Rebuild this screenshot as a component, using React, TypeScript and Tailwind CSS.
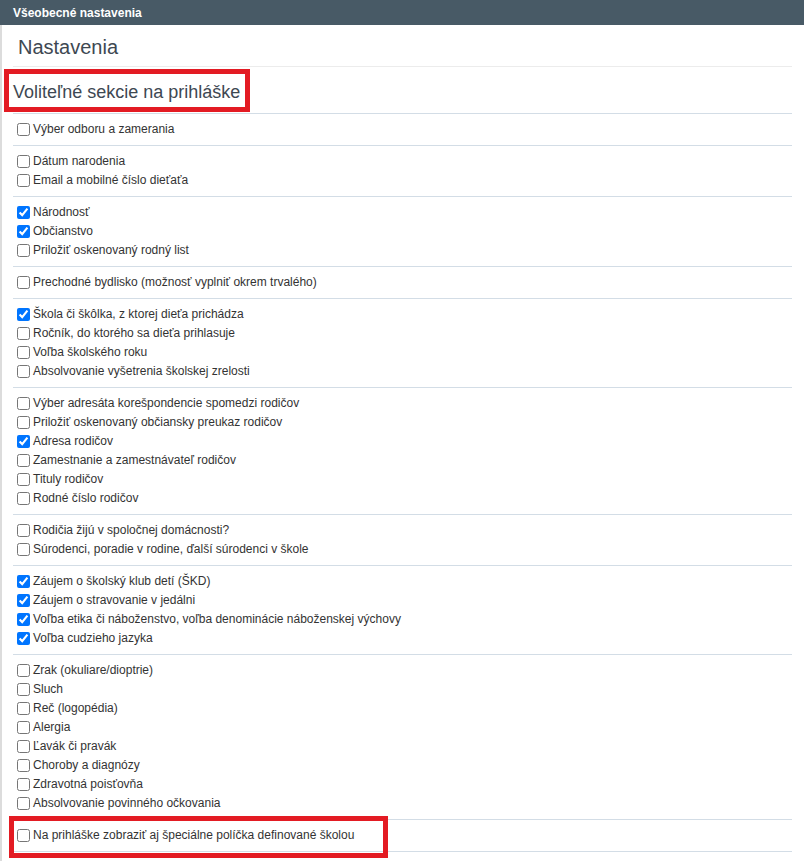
import React from "react";

type Item = { label: string; checked?: boolean };

const groups: Item[][] = [
  [{ label: "Výber odboru a zamerania" }],
  [{ label: "Dátum narodenia" }, { label: "Email a mobilné číslo dieťaťa" }],
  [
    { label: "Národnosť", checked: true },
    { label: "Občianstvo", checked: true },
    { label: "Priložiť oskenovaný rodný list" },
  ],
  [{ label: "Prechodné bydlisko (možnosť vyplniť okrem trvalého)" }],
  [
    { label: "Škola či škôlka, z ktorej dieťa prichádza", checked: true },
    { label: "Ročník, do ktorého sa dieťa prihlasuje" },
    { label: "Voľba školského roku" },
    { label: "Absolvovanie vyšetrenia školskej zrelosti" },
  ],
  [
    { label: "Výber adresáta korešpondencie spomedzi rodičov" },
    { label: "Priložiť oskenovaný občiansky preukaz rodičov" },
    { label: "Adresa rodičov", checked: true },
    { label: "Zamestnanie a zamestnávateľ rodičov" },
    { label: "Tituly rodičov" },
    { label: "Rodné číslo rodičov" },
  ],
  [
    { label: "Rodičia žijú v spoločnej domácnosti?" },
    { label: "Súrodenci, poradie v rodine, ďalší súrodenci v škole" },
  ],
  [
    { label: "Záujem o školský klub detí (ŠKD)", checked: true },
    { label: "Záujem o stravovanie v jedálni", checked: true },
    { label: "Voľba etika či náboženstvo, voľba denominácie náboženskej výchovy", checked: true },
    { label: "Voľba cudzieho jazyka", checked: true },
  ],
  [
    { label: "Zrak (okuliare/dioptrie)" },
    { label: "Sluch" },
    { label: "Reč (logopédia)" },
    { label: "Alergia" },
    { label: "Ľavák či pravák" },
    { label: "Choroby a diagnózy" },
    { label: "Zdravotná poisťovňa" },
    { label: "Absolvovanie povinného očkovania" },
  ],
  [{ label: "Na prihláške zobraziť aj špeciálne políčka definované školou" }],
];

function Row({ item }: { item: Item }) {
  return (
    <label className="flex items-center h-[19px] text-[12px] text-[#333333] leading-[19px]">
      <input
        type="checkbox"
        defaultChecked={item.checked}
        className="m-0 ml-[4px] mr-[3px] w-[13px] h-[13px] shrink-0"
      />
      <span>{item.label}</span>
    </label>
  );
}

export default function App() {
  return (
    <div
      className="relative w-[804px] min-h-[861px] bg-white"
      style={{ fontFamily: '"Liberation Sans", Arial, sans-serif' }}
    >
      <div className="h-[25px] bg-[#485a66] flex items-center pl-[13px]">
        <span className="text-white font-bold text-[12px]">Všeobecné nastavenia</span>
      </div>
      <div className="border-l-2 border-[#dcdcdc] min-h-[836px] pl-[11px] pr-[12px]">
        <div className="pt-[11px] pb-[7px] border-b border-[#ececec] pl-[5px]">
          <h1 className="text-[20px] leading-[23px] text-[#3e4852] font-normal">Nastavenia</h1>
        </div>
        <div className="pt-[15px] pb-[10px] border-b border-[#d3dde6]">
          <h2 className="text-[18px] leading-[21px] text-[#3e4852] font-normal">
            Voliteľné sekcie na prihláške
          </h2>
        </div>
        {groups.map((g, i) => (
          <div key={i} className="pt-[6px] pb-[6px] border-b border-[#d3dde6]">
            {g.map((it, j) => (
              <Row key={j} item={it} />
            ))}
          </div>
        ))}
      </div>
      <div className="absolute top-[69px] left-[4px] w-[246px] h-[43px] border-[5px] border-[#e31b23] pointer-events-none" />
      <div className="absolute top-[816px] left-[9px] w-[379px] h-[42px] border-[5px] border-[#e31b23] pointer-events-none" />
    </div>
  );
}
